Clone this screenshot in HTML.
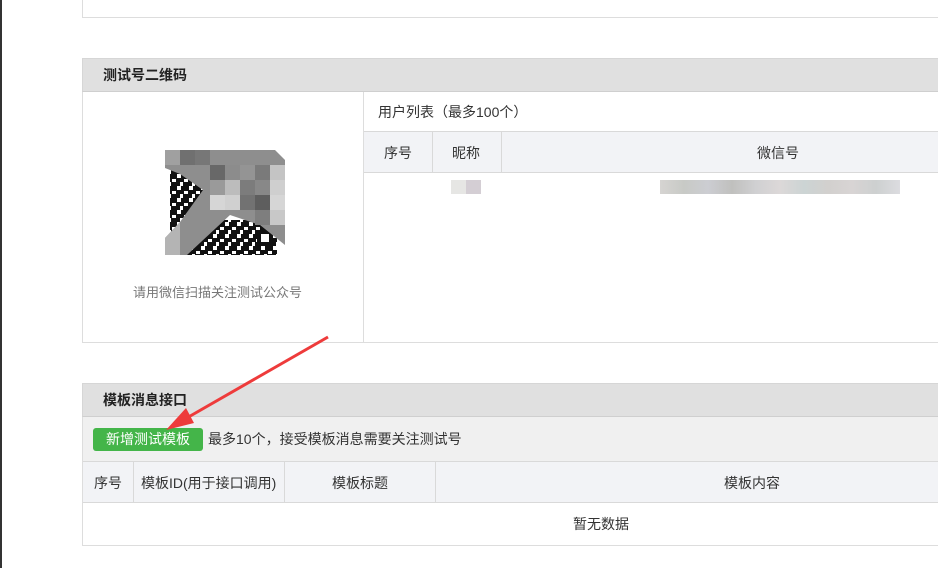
<!DOCTYPE html>
<html><head><meta charset="utf-8"><style>
*{margin:0;padding:0;box-sizing:border-box}
body{width:938px;height:568px;background:#fff;position:relative;overflow:hidden;font-family:"Liberation Sans","Noto Sans CJK SC",sans-serif;font-size:14px;color:#333}
.a{position:absolute}
.hd{background:#e0e0e0;border-top:1px solid #d6d6d6;border-bottom:1px solid #cfcfcf;font-weight:bold;color:#222;font-size:14px;padding-left:20px}
.th{background:#f2f3f6;border-bottom:1px solid #d9d9d9;border-top:1px solid #d9d9d9;text-align:center}
</style></head><body>
<div class="a" style="left:0;top:0;width:2px;height:568px;background:#333"></div>
<div class="a" style="left:82px;top:0;width:856px;height:18px;border-left:1px solid #ddd;border-bottom:1px solid #ddd"></div>

<!-- panel 1 -->
<div class="a hd" style="left:82px;top:58px;width:856px;height:34px;line-height:32px;border-left:1px solid #d6d6d6">测试号二维码</div>
<div class="a" style="left:82px;top:92px;width:856px;height:251px;border-left:1px solid #ddd;border-bottom:1px solid #ddd"></div>
<div class="a" style="left:363px;top:92px;width:1px;height:250px;background:#ddd"></div>
<div class="a" style="left:133px;top:282px;color:#777;font-size:13px">请用微信扫描关注测试公众号</div>
<svg class="a" style="left:165px;top:150px" width="121" height="105" viewBox="0 0 121 105">
<defs><pattern id="q" width="12" height="12" patternUnits="userSpaceOnUse">
<rect width="12" height="12" fill="#111"/><rect x="0" y="0" width="4" height="4" fill="#fff"/><rect x="7" y="5" width="4" height="3" fill="#fff"/><rect x="3" y="8" width="3" height="4" fill="#fff"/></pattern></defs>
<rect width="121" height="105" fill="#fff"/>
<rect x="45" y="0" width="65" height="12" fill="url(#q)"/>
<rect x="5" y="20" width="35" height="65" fill="url(#q)"/>
<rect x="20" y="70" width="92" height="35" fill="url(#q)"/>
<rect x="92" y="80" width="16" height="16" fill="#111"/><rect x="96" y="84" width="8" height="8" fill="#fff"/>
<polygon points="0,0 110,0 120,10 120,95 95,75 65,65 22,105 0,105 0,88 15,72 38,40 15,24 0,18" fill="#8e8e8e"/>
<rect x="0" y="0" width="15" height="15" fill="#a0a0a0"/><rect x="15" y="0" width="15" height="15" fill="#707070"/><rect x="30" y="0" width="15" height="15" fill="#777"/>
<rect x="45" y="15" width="15" height="15" fill="#686868"/><rect x="60" y="15" width="15" height="15" fill="#8c8c8c"/><rect x="75" y="15" width="15" height="15" fill="#949494"/><rect x="90" y="15" width="15" height="15" fill="#7a7a7a"/><rect x="105" y="15" width="15" height="15" fill="#c4c4c4"/>
<rect x="45" y="30" width="15" height="15" fill="#9a9a9a"/><rect x="60" y="30" width="15" height="15" fill="#bcbcbc"/><rect x="75" y="30" width="15" height="15" fill="#7c7c7c"/><rect x="90" y="30" width="15" height="15" fill="#888"/><rect x="105" y="30" width="15" height="15" fill="#cfcfcf"/>
<rect x="45" y="45" width="15" height="15" fill="#d6d6d6"/><rect x="60" y="45" width="15" height="15" fill="#d0d0d0"/><rect x="75" y="45" width="15" height="15" fill="#727272"/><rect x="90" y="45" width="15" height="15" fill="#5e5e5e"/><rect x="105" y="45" width="15" height="15" fill="#d6d6d6"/>
<rect x="90" y="60" width="15" height="15" fill="#7e7e7e"/><rect x="105" y="60" width="15" height="15" fill="#c8c8c8"/>
<polygon points="0,88 15,72 15,105 0,105" fill="#b4b4b4"/>
</svg>

<div class="a" style="left:378px;top:102px">用户列表（最多100个）</div>
<div class="a th" style="left:364px;top:131px;width:574px;height:42px"></div>
<div class="a" style="left:432px;top:131px;width:1px;height:41px;background:#d9d9d9"></div>
<div class="a" style="left:501px;top:131px;width:1px;height:41px;background:#d9d9d9"></div>
<div class="a" style="left:384px;top:143px">序号</div>
<div class="a" style="left:452px;top:143px">昵称</div>
<div class="a" style="left:757px;top:143px">微信号</div>
<div class="a" style="left:451px;top:180px;width:30px;height:14px;background:linear-gradient(90deg,#e6e6e4 50%,#d4ced4 50%)"></div>
<div class="a" style="left:660px;top:180px;width:240px;height:14px;background:linear-gradient(90deg,#d6d4d2,#c8cac6,#cccdd2,#c0c0be,#d0d0d2,#dcd8d8,#ccd4d4,#d2d0ce,#d8d4d4,#cdd0d0,#dcdce0)"></div>

<!-- panel 2 -->
<div class="a hd" style="left:82px;top:383px;width:856px;height:34px;line-height:32px;border-left:1px solid #d6d6d6">模板消息接口</div>
<div class="a" style="left:82px;top:417px;width:856px;height:129px;border-left:1px solid #ddd;border-bottom:1px solid #ddd"></div>
<div class="a" style="left:83px;top:417px;width:855px;height:45px;background:#f0f0f0"></div>
<div class="a" style="left:93px;top:428px;width:110px;height:23px;background:#44b549;border-radius:3px;color:#fff;text-align:center;line-height:23px;font-size:14px">新增测试模板</div>
<div class="a" style="left:208px;top:429px">最多10个，接受模板消息需要关注测试号</div>
<div class="a th" style="left:83px;top:461px;width:855px;height:42px"></div>
<div class="a" style="left:133px;top:461px;width:1px;height:41px;background:#d9d9d9"></div>
<div class="a" style="left:284px;top:461px;width:1px;height:41px;background:#d9d9d9"></div>
<div class="a" style="left:435px;top:461px;width:1px;height:41px;background:#d9d9d9"></div>
<div class="a" style="left:94px;top:473px">序号</div>
<div class="a" style="left:141px;top:473px">模板ID(用于接口调用)</div>
<div class="a" style="left:332px;top:473px">模板标题</div>
<div class="a" style="left:724px;top:473px">模板内容</div>
<div class="a" style="left:573px;top:514px">暂无数据</div>

<!-- arrow -->
<svg class="a" style="left:0;top:0;z-index:5" width="938" height="568">
<path d="M328,337 L185,419" stroke="#ee3b3b" stroke-width="3" fill="none"/>
<polygon points="166,430 186,408 194,423" fill="#ee3b3b"/>
</svg>
</body></html>
